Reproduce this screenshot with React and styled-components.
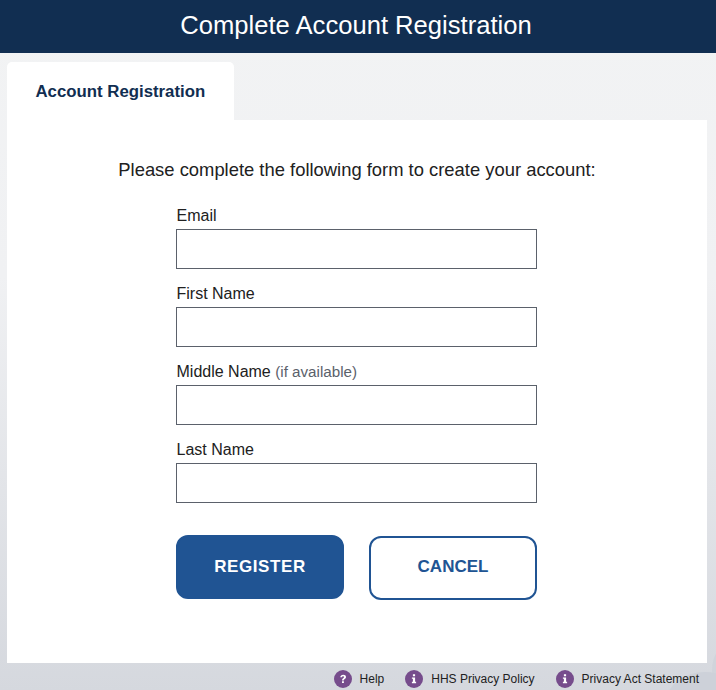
import React from "react";
import styled, { createGlobalStyle } from "styled-components";

const Global = createGlobalStyle`
  html, body { margin: 0; padding: 0; height: 100%; }
  body { font-family: "Liberation Sans", Arial, sans-serif; color: #212529; }
  * { box-sizing: border-box; }
`;

const Page = styled.div`
  position: relative;
  width: 716px;
  height: 690px;
  overflow: hidden;
  display: flex;
  flex-direction: column;
  background: linear-gradient(180deg, #f2f3f4 0%, #f0f1f3 40%, #d5d8de 100%);
`;

const Header = styled.header`
  height: 53px;
  flex: none;
  background: #112e51;
  color: #fff;
  display: flex;
  align-items: center;
  justify-content: center;
  font-size: 25.6px;
  padding: 0 4px 2px 0;
`;

const Main = styled.main`
  flex: 1;
  display: flex;
  flex-direction: column;
  padding: 9px 9px 0 7px;
`;

const Tab = styled.div`
  width: 227px;
  height: 58px;
  background: #fff;
  border-radius: 5px 5px 0 0;
  color: #112e51;
  font-weight: 700;
  font-size: 16.8px;
  padding: 20px 0 0 28.5px;
  line-height: 19px;
`;

const Panel = styled.section`
  position: relative;
  z-index: 1;
  background: #fff;
  height: 543px;
  padding-top: 39px;
  display: flex;
  flex-direction: column;
  align-items: center;
`;

const Intro = styled.p`
  margin: 0 0 26px;
  font-size: 18.4px;
  line-height: 21px;
  color: #212121;
`;

const Form = styled.form`
  width: 361px;
  margin-left: -1px;
  display: flex;
  flex-direction: column;
`;

const Field = styled.div`
  display: flex;
  flex-direction: column;
  margin-bottom: 15px;
`;

const Label = styled.label`
  font-size: 16px;
  line-height: 18px;
  height: 18px;
  margin-bottom: 5px;
  padding: 1px 0 0 0.5px;
  color: #212121;
`;

const Hint = styled.span`
  font-size: 15.2px;
  color: #5b616b;
`;

const Input = styled.input`
  width: 361px;
  height: 40px;
  border: 1px solid #5b616b;
  background: #fff;
  border-radius: 0;
  padding: 0 8px;
`;

const Buttons = styled.div`
  display: flex;
  justify-content: space-between;
  align-items: flex-start;
  margin-top: 17px;
`;

const Button = styled.button`
  width: 168px;
  height: 64px;
  border-radius: 12px;
  border: 2px solid #205493;
  background: ${(p) => (p.$primary ? "#205493" : "#fff")};
  color: ${(p) => (p.$primary ? "#fff" : "#205493")};
  font-family: inherit;
  font-weight: 700;
  font-size: 17px;
  letter-spacing: ${(p) => (p.$primary ? "0.6px" : "0")};
  text-transform: uppercase;
  padding: 0;
`;

const CancelButton = styled(Button)`
  margin-top: 1px;
  padding-bottom: 2px;
`;

const Footer = styled.footer`
  flex: 1;
  display: flex;
  justify-content: flex-end;
  align-items: center;
  gap: 21px;
  padding: 4px 8px 0 0;
  position: relative;
  z-index: 1;
`;

const FootLink = styled.a`
  display: flex;
  align-items: center;
  gap: 8px;
  font-size: 12px;
  color: #212121;
  text-decoration: none;
`;

const Badge = styled.svg`
  width: 18px;
  height: 18px;
  flex: none;
`;

const Blob = styled.div`
  position: absolute;
  right: -27px;
  bottom: -38px;
  width: 76px;
  height: 56px;
  border-radius: 50%;
  background: #cdd1d9;
`;

const SideBlob = styled.div`
  position: absolute;
  right: -44px;
  bottom: -10px;
  width: 48px;
  height: 60px;
  border-radius: 50%;
  background: #d0d4db;
`;

const Icon = ({ glyph }) => (
  <Badge viewBox="0 0 18 18" aria-hidden="true">
    <circle cx="9" cy="9" r="9" fill="#764c8c" />
    {glyph === "?" ? (
      <path
        d="M6.3 7.2C6.4 5.6 7.6 4.7 9.2 4.7c1.6 0 2.8.9 2.8 2.3 0 1.1-.6 1.7-1.5 2.2-.6.4-.7.6-.7 1.2H8.1c0-1.2.3-1.7 1.1-2.2.6-.4.9-.6.9-1.1 0-.5-.4-.8-1-.8s-1 .4-1 1zM8 11.2h1.9v1.9H8z"
        fill="#fff"
      />
    ) : (
      <path d="M7.9 4.2h2.2v2H7.9zM6.9 7.4h3.2v4.4h1v1.4H6.9v-1.4h1v-3H6.9z" fill="#fff" />
    )}
  </Badge>
);

export default function App() {
  return (
    <Page>
      <Global />
      <SideBlob />
      <Blob />
      <Header>Complete Account Registration</Header>
      <Main>
        <Tab>Account Registration</Tab>
        <Panel>
          <Intro>Please complete the following form to create your account:</Intro>
          <Form onSubmit={(e) => e.preventDefault()}>
            <Field>
              <Label>Email</Label>
              <Input type="text" />
            </Field>
            <Field>
              <Label>First Name</Label>
              <Input type="text" />
            </Field>
            <Field>
              <Label>
                Middle Name <Hint>(if available)</Hint>
              </Label>
              <Input type="text" />
            </Field>
            <Field>
              <Label>Last Name</Label>
              <Input type="text" />
            </Field>
            <Buttons>
              <Button $primary type="submit">Register</Button>
              <CancelButton type="button">Cancel</CancelButton>
            </Buttons>
          </Form>
        </Panel>
        <Footer>
          <FootLink href="#"><Icon glyph="?" />Help</FootLink>
          <FootLink href="#"><Icon glyph="i" />HHS Privacy Policy</FootLink>
          <FootLink href="#"><Icon glyph="i" />Privacy Act Statement</FootLink>
        </Footer>
      </Main>
    </Page>
  );
}
